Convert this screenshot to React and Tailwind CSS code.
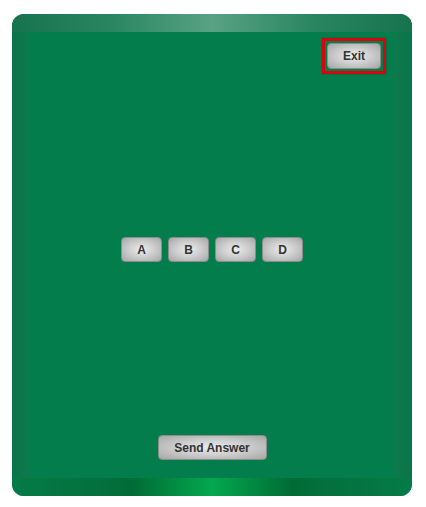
const BTN =
  'flex items-center justify-center rounded-[4px] border border-[#8c8c8c] bg-[radial-gradient(ellipse_at_center,#ececec_0%,#cfcfcf_45%,#a6a6a6_100%)] text-[12px] font-bold text-[#333] font-["Liberation_Sans",Arial,sans-serif]';

export default function App() {
  const letters = ['A', 'B', 'C', 'D'];

  return (
    <div className="min-h-[507px] w-[426px] bg-white pl-[12px] pt-[14px]">
      <div className="flex h-[482px] w-[400px] flex-col overflow-hidden rounded-[12px] bg-[#0b774a]">
        {/* top rim */}
        <div className="h-[18px] bg-[linear-gradient(90deg,#17734d_0%,#2a8660_25%,#58a283_50%,#2a8660_75%,#17734d_100%)]" />

        <div className="flex flex-1 px-[18px] bg-[linear-gradient(90deg,#0a7448_0%,#0d7a4c_4.5%,#0d7a4c_95.5%,#0a7448_100%)]">
          <div className="flex flex-1 flex-col bg-[#027d4b]">
            {/* exit */}
            <div className="flex justify-end pr-[8px] pt-[6px]">
              <div className="h-[36px] w-[64px] border-[3px] border-[#d8050f] p-[2px] shadow-[0_0_1px_#0b3b22]">
                <button className={`${BTN} h-full w-full`}>Exit</button>
              </div>
            </div>

            {/* answers */}
            <div className="flex flex-1 items-center justify-center gap-[6px] pb-[10px]">
              {letters.map((l) => (
                <button key={l} className={`${BTN} h-[25px] w-[41px]`}>
                  {l}
                </button>
              ))}
            </div>

            <div className="flex justify-center pb-[18px]">
              <button className={`${BTN} h-[25px] w-[109px]`}>Send Answer</button>
            </div>
          </div>
        </div>

        {/* bottom rim */}
        <div className="h-[18px] bg-[linear-gradient(90deg,#047b48_0%,#03703d_22%,#006b35_30%,#04a84f_50%,#006b35_70%,#03703d_78%,#047b48_100%)]" />
      </div>
    </div>
  );
}
